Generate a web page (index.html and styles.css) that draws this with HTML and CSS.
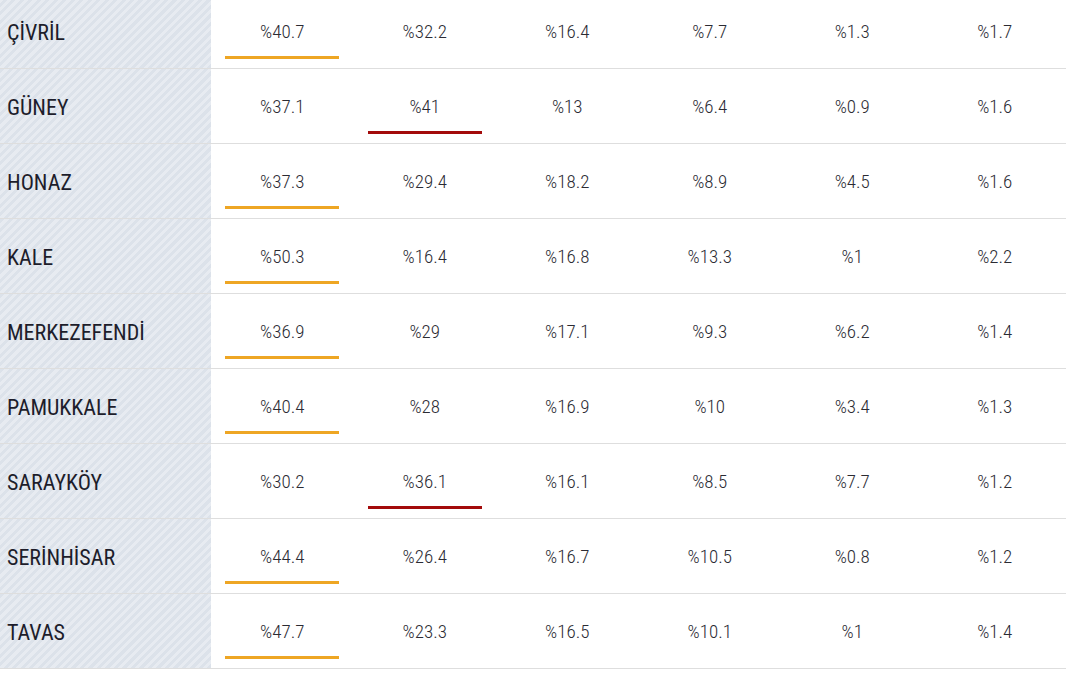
FILE: index.html
```html
<!DOCTYPE html>
<html lang="tr">
<head>
<meta charset="utf-8">
<title>Sonuçlar</title>
<link rel="stylesheet" href="styles.css">
</head>
<body>
<div class="table">
  <div class="row">
    <div class="name">ÇİVRİL</div>
    <div class="cell"><span>%40.7</span><i class="bar orange"></i></div>
    <div class="cell"><span>%32.2</span></div>
    <div class="cell"><span>%16.4</span></div>
    <div class="cell"><span>%7.7</span></div>
    <div class="cell"><span>%1.3</span></div>
    <div class="cell"><span>%1.7</span></div>
  </div>
  <div class="row">
    <div class="name">GÜNEY</div>
    <div class="cell"><span>%37.1</span></div>
    <div class="cell"><span>%41</span><i class="bar red"></i></div>
    <div class="cell"><span>%13</span></div>
    <div class="cell"><span>%6.4</span></div>
    <div class="cell"><span>%0.9</span></div>
    <div class="cell"><span>%1.6</span></div>
  </div>
  <div class="row">
    <div class="name">HONAZ</div>
    <div class="cell"><span>%37.3</span><i class="bar orange"></i></div>
    <div class="cell"><span>%29.4</span></div>
    <div class="cell"><span>%18.2</span></div>
    <div class="cell"><span>%8.9</span></div>
    <div class="cell"><span>%4.5</span></div>
    <div class="cell"><span>%1.6</span></div>
  </div>
  <div class="row">
    <div class="name">KALE</div>
    <div class="cell"><span>%50.3</span><i class="bar orange"></i></div>
    <div class="cell"><span>%16.4</span></div>
    <div class="cell"><span>%16.8</span></div>
    <div class="cell"><span>%13.3</span></div>
    <div class="cell"><span>%1</span></div>
    <div class="cell"><span>%2.2</span></div>
  </div>
  <div class="row">
    <div class="name">MERKEZEFENDİ</div>
    <div class="cell"><span>%36.9</span><i class="bar orange"></i></div>
    <div class="cell"><span>%29</span></div>
    <div class="cell"><span>%17.1</span></div>
    <div class="cell"><span>%9.3</span></div>
    <div class="cell"><span>%6.2</span></div>
    <div class="cell"><span>%1.4</span></div>
  </div>
  <div class="row">
    <div class="name">PAMUKKALE</div>
    <div class="cell"><span>%40.4</span><i class="bar orange"></i></div>
    <div class="cell"><span>%28</span></div>
    <div class="cell"><span>%16.9</span></div>
    <div class="cell"><span>%10</span></div>
    <div class="cell"><span>%3.4</span></div>
    <div class="cell"><span>%1.3</span></div>
  </div>
  <div class="row">
    <div class="name">SARAYKÖY</div>
    <div class="cell"><span>%30.2</span></div>
    <div class="cell"><span>%36.1</span><i class="bar red"></i></div>
    <div class="cell"><span>%16.1</span></div>
    <div class="cell"><span>%8.5</span></div>
    <div class="cell"><span>%7.7</span></div>
    <div class="cell"><span>%1.2</span></div>
  </div>
  <div class="row">
    <div class="name">SERİNHİSAR</div>
    <div class="cell"><span>%44.4</span><i class="bar orange"></i></div>
    <div class="cell"><span>%26.4</span></div>
    <div class="cell"><span>%16.7</span></div>
    <div class="cell"><span>%10.5</span></div>
    <div class="cell"><span>%0.8</span></div>
    <div class="cell"><span>%1.2</span></div>
  </div>
  <div class="row">
    <div class="name">TAVAS</div>
    <div class="cell"><span>%47.7</span><i class="bar orange"></i></div>
    <div class="cell"><span>%23.3</span></div>
    <div class="cell"><span>%16.5</span></div>
    <div class="cell"><span>%10.1</span></div>
    <div class="cell"><span>%1</span></div>
    <div class="cell"><span>%1.4</span></div>
  </div>
</div>
</body>
</html>
```
FILE: styles.css
```css
html, body {
  margin: 0;
  padding: 0;
  background: #ffffff;
  overflow: hidden;
}

body {
  font-family: "Roboto Condensed", "Liberation Sans Narrow", "Roboto", sans-serif;
}

.table {
  width: 1066px;
  margin-top: -6px;
}

.row {
  display: grid;
  grid-template-columns: 211px repeat(6, 1fr);
  height: 75px;
  box-sizing: border-box;
  border-bottom: 1px solid #dedede;
}

.name {
  display: flex;
  align-items: center;
  padding-left: 7px;
  padding-top: 3px;
  font-size: 22px;
  font-weight: 400;
  color: #1d1d2b;
  background-color: #e1e6ed;
  background-image: repeating-linear-gradient(
    -45deg,
    #dce2ea 0px,
    #dce2ea 3px,
    #e7ebf1 3px,
    #e7ebf1 6px
  );
}

.cell {
  display: flex;
  flex-direction: column;
  align-items: center;
  padding-top: 27px;
  font-size: 19px;
  font-weight: 300;
  line-height: 22px;
  color: #2b2b33;
}

.bar {
  display: block;
  width: 114px;
  height: 3px;
  margin-top: 13px;
}

.bar.orange {
  background: #eea624;
}

.bar.red {
  background: #a30b0b;
}
```
